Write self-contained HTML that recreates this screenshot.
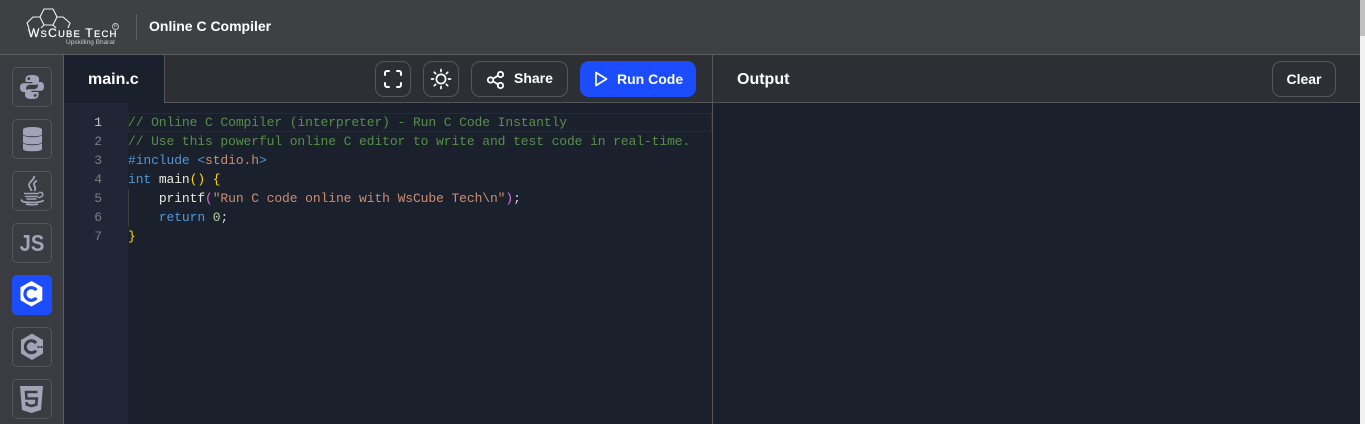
<!DOCTYPE html>
<html><head><meta charset="utf-8"><style>
html,body{margin:0;padding:0;width:1365px;height:424px;overflow:hidden;background:#1b202d}
*{box-sizing:border-box}
.a{position:absolute}
.ui{font-family:"Liberation Sans",sans-serif;font-weight:700;color:#fff}
.side{left:12px;width:40px;height:40px;border:1px solid #54565b;border-radius:5px}
.side svg{position:absolute;left:-1px;top:-1px}
.btn{border:1px solid #55565b;border-radius:9px;background:#2e2f34}
.code{left:128px;font:13px/19px "Liberation Mono",monospace;letter-spacing:-.1px;white-space:pre;color:#d4d4d4;height:19px}
.ln{left:64px;width:38px;text-align:right;font:13px/19px "Liberation Mono",monospace;color:#7d7d7d;height:19px}
.c{color:#568f49}.k{color:#4f98d8}.s{color:#ce8d70}.y{color:#ffd700}.p{color:#da70d6}.n{color:#b5cea8}.f{color:#e8e8d8}
</style></head><body>
<div class="a" style="left:0;top:0;width:1360px;height:54px;background:#3f4042"></div>
<div class="a" style="left:0;top:54px;width:1360px;height:1px;background:#5c5d60"></div>
<div class="a" style="left:1360px;top:0;width:5px;height:424px;background:#f1f1f1"></div>
<div class="a" style="left:1360px;top:0;width:5px;height:36px;background:#c1c1c1"></div>

<!-- logo -->
<svg class="a" style="left:24px;top:6px" width="100" height="42" viewBox="0 0 100 42" fill="none" stroke="#f2f2f2" stroke-width="1.100">
<path d="M16 11L20 3H29L33 11L29 19H20ZM16 11H9L3 17L5 22M20 19L17 22M33 11H39L46 17L44 22M29 19L32 22"/>
</svg>
<div class="a" style="left:28px;top:26px;width:92px;font:400 12px/14px 'Liberation Sans',sans-serif;color:#fff;letter-spacing:1.200px;white-space:nowrap;-webkit-text-stroke:.2px #fff">W<span style="font-size:9.500px">S</span>C<span style="font-size:9.500px">UBE</span> T<span style="font-size:9.500px">ECH</span></div>
<div class="a" style="left:112px;top:23px;width:7px;height:7px;border:1px solid #bbb;border-radius:50%;font:5px/5px 'Liberation Sans',sans-serif;color:#bbb;text-align:center">R</div>
<div class="a" style="left:66px;top:38px;font:6.500px/9px 'Liberation Sans',sans-serif;color:#c8c8c8;white-space:nowrap">Upskilling Bharat</div>
<div class="a" style="left:136px;top:14px;width:1px;height:26px;background:#5c5d60"></div>
<div class="a ui" style="left:149px;top:17px;font-size:14px;line-height:18px;white-space:nowrap">Online C Compiler</div>

<!-- sidebar -->
<div class="a" style="left:0;top:55px;width:63px;height:369px;background:#3a3c41"></div>
<div class="a" style="left:63px;top:55px;width:1px;height:369px;background:#5c5d60"></div>

<div class="a side" style="top:67px"><svg width="40" height="40" viewBox="0 0 40 40" fill="#a3a3b8">
<path d="M20 8c-5 0-6.500 1.500-6.500 4v3h7v1.200H11.500C9 16.200 8 18 8 20.500s1 4.500 3.500 4.500H14v-3.300c0-2.400 2-4 4.500-4H24c1.800 0 3-1.300 3-3V12C27 9.500 25 8 20 8zm-3.200 2.200a1.400 1.400 0 1 1 0 2.800 1.400 1.400 0 0 1 0-2.800z"/>
<path d="M20 32c5 0 6.500-1.500 6.500-4v-3h-7v-1.200h9C31 23.800 32 22 32 19.500S31 15 28.500 15H26v3.300c0 2.400-2 4-4.500 4H16c-1.800 0-3 1.300-3 3V28c0 2.500 2 4 7 4zm3.200-2.200a1.400 1.400 0 1 1 0-2.800 1.400 1.400 0 0 1 0 2.800z"/></svg></div>

<div class="a side" style="top:119px"><svg width="40" height="40" viewBox="0 0 40 40" fill="#a3a3b8">
<path d="M11 10.500C11 9 15 8 20.500 8S30 9 30 10.500V15c0 1.500-4 2.300-9.500 2.300S11 16.500 11 15z"/><path d="M11 16.200c2 1.400 5.500 2 9.500 2s7.500-.6 9.500-2V23c0 1.500-4 2.300-9.500 2.300S11 24.500 11 23z"/><path d="M11 24.200c2 1.400 5.500 2 9.500 2s7.500-.6 9.500-2V30c0 1.500-4 2.300-9.500 2.300S11 31.500 11 30z"/></svg></div>

<div class="a side" style="top:171px"><svg width="40" height="40" viewBox="0 0 40 40" fill="none" stroke="#a3a3b8" stroke-width="1.800">
<path d="M22 5c1 3.500-5 5.500-5 9 0 2 2 3 2.500 6M25 9.500c-3.500 2-3.500 4-2.500 5.500s1 3 0 5"/>
<path d="M12 22.500h15M13 25.500h13M14.500 28h10" stroke-width="1.500"/>
<path d="M27 21.500c3.500-.5 4.500 1.500 3.500 3s-3 2-4.500 2" stroke-width="1.500"/>
<path d="M10 28.500c-2 2 2.500 3 10 3 6 0 11-1 11.500-2.500" stroke-width="1.700"/><path d="M14 33c3 1 9 1 12 0" stroke-width="1.500"/></svg></div>

<div class="a side" style="top:223px"><div class="a" style="left:0;top:0;width:38px;text-align:center;font:700 23px/38px 'Liberation Sans',sans-serif;color:#a3a3b8;transform:scaleX(.88)">JS</div></div>

<div class="a side" style="top:275px;background:#1b4dff;border-color:#1b4dff"><svg width="40" height="40" viewBox="0 0 40 40">
<path d="M19.500 6l10.800 6.300v12.900L19.500 31.500 8.500 25.200V12.300z" fill="#fff"/>
<path d="M24.300 15.200a6.300 6.300 0 1 0 0 7.600" fill="none" stroke="#1b4dff" stroke-width="3.200"/></svg></div>

<div class="a side" style="top:327px"><svg width="40" height="40" viewBox="0 0 40 40">
<path d="M20 6.500l11 6.500v13.500L20 33 9 26.500V13z" fill="#a3a3b8"/>
<path d="M24 16a6 6 0 1 0 0 7.500" fill="none" stroke="#3a3c41" stroke-width="3"/>
<path d="M25.500 19h2v2h-2zM28.500 19h2v2h-2z" fill="#3a3c41"/></svg></div>

<div class="a side" style="top:379px"><svg width="40" height="40" viewBox="0 0 40 40">
<path d="M8 7h23l-2 24-9.500 3L10 31z" fill="#a3a3b8"/>
<path d="M25.500 13H14l.5 6.500h10.300l-.5 6-4.800 1.500-4.800-1.500-.2-2.500" fill="none" stroke="#3a3c41" stroke-width="2.600"/></svg></div>

<!-- tab row -->
<div class="a" style="left:64px;top:55px;width:1296px;height:48px;background:#2e2f34"></div>
<div class="a" style="left:164px;top:102px;width:1196px;height:1px;background:#55565a"></div>
<div class="a" style="left:64px;top:55px;width:100px;height:48px;background:#1b202d"></div>
<div class="a" style="left:164px;top:55px;width:1px;height:48px;background:#55565a"></div>
<div class="a ui" style="left:88px;top:70px;font-size:16px;line-height:20px">main.c</div>

<div class="a btn" style="left:375px;top:61px;width:36px;height:36px"><svg class="a" style="left:5px;top:5px" width="24" height="24" viewBox="0 0 24 24" fill="none" stroke="#fff" stroke-width="2" stroke-linecap="round" stroke-linejoin="round"><path d="M4 8V6a2 2 0 0 1 2-2h2M16 4h2a2 2 0 0 1 2 2v2M20 16v2a2 2 0 0 1-2 2h-2M8 20H6a2 2 0 0 1-2-2v-2"/></svg></div>
<div class="a btn" style="left:423px;top:61px;width:36px;height:36px"><svg class="a" style="left:5px;top:5px" width="24" height="24" viewBox="0 0 24 24" fill="none" stroke="#fff" stroke-width="1.700" stroke-linecap="round"><circle cx="12" cy="12" r="4.600"/><path d="M12 2.500v2M12 19.500v2M2.500 12h2M19.500 12h2M5.300 5.300l1.400 1.400M17.300 17.300l1.400 1.400M5.300 18.700l1.400-1.400M17.300 6.700l1.400-1.400"/></svg></div>
<div class="a btn" style="left:471px;top:61px;width:97px;height:36px"><svg class="a" style="left:14px;top:8px" width="20" height="20" viewBox="0 0 20 20" fill="none" stroke="#fff" stroke-width="1.800"><circle cx="4.500" cy="10" r="2.700"/><circle cx="14.500" cy="4.500" r="2.700"/><circle cx="14.500" cy="15.500" r="2.700"/><path d="M7 8.700l5-3M7 11.300l5 3"/></svg>
<div class="a ui" style="left:42px;top:8px;font-size:14px;line-height:17px">Share</div></div>
<div class="a" style="left:580px;top:61px;width:116px;height:36px;border-radius:9px;background:#1b4dff"><svg class="a" style="left:12px;top:9px" width="18" height="18" viewBox="0 0 18 18" fill="none" stroke="#fff" stroke-width="1.700" stroke-linejoin="round"><path d="M4 2.500v13l10.500-6.500z"/></svg>
<div class="a ui" style="left:37px;top:10px;font-size:14px;line-height:17px;white-space:nowrap">Run Code</div></div>

<div class="a ui" style="left:737px;top:70px;font-size:16px;line-height:20px">Output</div>
<div class="a btn" style="left:1272px;top:61px;width:64px;height:36px"><div class="a ui" style="left:0;top:9px;width:62px;text-align:center;font-size:14px;line-height:17px">Clear</div></div>

<!-- editor -->
<div class="a" style="left:64px;top:103px;width:64px;height:321px;background:#202636"></div>
<div class="a" style="left:712px;top:55px;width:1px;height:369px;background:#55565a"></div>
<div class="a" style="left:128px;top:113px;width:584px;height:19px;border:1px solid #282a2f"></div>
<div class="a" style="left:128px;top:189px;width:1px;height:38px;background:#3c3f46"></div>

<div class="a ln" style="top:113px;color:#c6c6c6">1</div>
<div class="a ln" style="top:132px">2</div>
<div class="a ln" style="top:151px">3</div>
<div class="a ln" style="top:170px">4</div>
<div class="a ln" style="top:189px">5</div>
<div class="a ln" style="top:208px">6</div>
<div class="a ln" style="top:227px">7</div>

<div class="a code c" style="top:113px">// Online C Compiler (interpreter) - Run C Code Instantly</div>
<div class="a code c" style="top:132px">// Use this powerful online C editor to write and test code in real-time.</div>
<div class="a code" style="top:151px"><span class="k">#include</span> <span class="k">&lt;</span><span class="s">stdio.h</span><span class="k">&gt;</span></div>
<div class="a code" style="top:170px"><span class="k">int</span> <span class="f">main</span><span class="y">()</span> <span class="y">{</span></div>
<div class="a code" style="top:189px">    <span class="f">printf</span><span class="p">(</span><span class="s">"Run C code online with WsCube Tech\n"</span><span class="p">)</span>;</div>
<div class="a code" style="top:208px">    <span class="k">return</span> <span class="n">0</span>;</div>
<div class="a code" style="top:227px"><span class="y">}</span></div>
</body></html>
